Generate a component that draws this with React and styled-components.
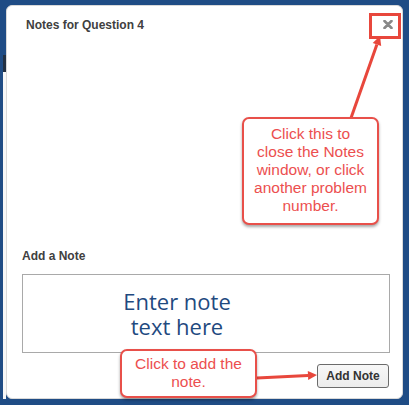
import React from 'react'
import styled, { createGlobalStyle } from 'styled-components'

const GlobalStyle = createGlobalStyle`
  html, body {
    margin: 0;
    padding: 0;
    height: 100%;
    overflow: hidden;
  }
  body {
    font-family: "Liberation Sans", Arial, sans-serif;
    background: #1f4c85;
  }
`

const Stage = styled.div`
  position: relative;
  width: 409px;
  height: 405px;
`

const Frame = styled.div`
  display: flex;
  height: 100%;
  box-sizing: border-box;
  padding: 5px 6px 6px 3px;
  background: #1f4c85;
`

// a sliver of the page behind the dialog
const PageEdge = styled.div`
  width: 3px;
  margin-top: 50px;
  background: linear-gradient(#223043 0 17px, #f7f7f7 17px);
`

const Modal = styled.div`
  flex: 1;
  display: flex;
  flex-direction: column;
  background: #fff;
  border: 1px solid #d9d9d9;
  border-radius: 6px;
  padding: 0 12px 10px 15px;
`

const Header = styled.div`
  display: flex;
  justify-content: space-between;
  align-items: flex-start;
  padding: 12px 0 0 4px;
`

const Title = styled.h4`
  margin: 0;
  font-size: 12px;
  line-height: 14px;
  font-weight: bold;
  color: #404040;
`

const CloseButton = styled.button`
  margin: 2px -3px 0 0;
  padding: 0;
  border: 0;
  background: none;
  width: 10px;
  height: 9px;
  display: flex;
  cursor: pointer;
`

const Spacer = styled.div`
  flex: 1;
`

const Label = styled.label`
  font-size: 12px;
  line-height: 14px;
  font-weight: bold;
  color: #404040;
  margin-bottom: 11px;
`

const NoteArea = styled.textarea`
  box-sizing: border-box;
  width: 100%;
  height: 79px;
  margin: 0;
  border: 1px solid #a9a9a9;
  padding: 14px 58px 0 0;
  resize: none;
  text-align: center;
  font-family: "Open Sans", sans-serif;
  font-size: 22px;
  line-height: 25px;
  color: #1f4a7f;
  outline: none;

  &::placeholder {
    color: #1f4a7f;
    opacity: 1;
  }
`

const ButtonRow = styled.div`
  display: flex;
  justify-content: flex-end;
  margin-top: 11px;
  padding-right: 1px;
`

const AddButton = styled.button`
  box-sizing: border-box;
  width: 72px;
  height: 24px;
  border: 1px solid #6b6b6b;
  border-radius: 3px;
  background: linear-gradient(#f7f7f7, #ececec);
  font-family: "Liberation Sans", Arial, sans-serif;
  font-size: 12px;
  font-weight: bold;
  color: #333;
  padding: 0;
`

const Overlay = styled.svg`
  position: absolute;
  inset: 0;
  pointer-events: none;
`

const Highlight = styled.div`
  position: absolute;
  left: 369px;
  top: 13px;
  width: 32px;
  height: 26px;
  box-sizing: border-box;
  border: 3px solid #e8473c;
`

const Callout = styled.div`
  position: absolute;
  left: ${p => p.$x}px;
  top: ${p => p.$y}px;
  width: ${p => p.$w}px;
  height: ${p => p.$h}px;
  box-sizing: border-box;
  padding-top: ${p => p.$pad}px;
  border: 2px solid #e8504a;
  border-radius: 7px;
  background: #fff;
  box-shadow: 0 2px 3px rgba(0, 0, 0, 0.35);
  text-align: center;
  font-size: 15.5px;
  line-height: 18px;
  color: #ec4f4f;
`

const RED = '#e8473c'

function App() {
  return (
    <Stage>
      <GlobalStyle />
      <Frame>
        <PageEdge />
        <Modal>
          <Header>
            <Title>Notes for Question 4</Title>
            <CloseButton aria-label="Close">
              <svg width="10" height="9" viewBox="0 0 10 9">
                <path d="M1.5 1 L8.5 8 M8.5 1 L1.5 8" stroke="#888" strokeWidth="2.6" strokeLinecap="round" />
              </svg>
            </CloseButton>
          </Header>
          <Spacer />
          <Label htmlFor="note">Add a Note</Label>
          <NoteArea id="note" placeholder={'Enter note\ntext here'} />
          <ButtonRow>
            <AddButton>Add Note</AddButton>
          </ButtonRow>
        </Modal>
      </Frame>

      <Highlight />
      <Overlay width="409" height="405" viewBox="0 0 409 405">
        <line x1="351" y1="118" x2="376.9" y2="44.5" stroke={RED} strokeWidth="3" />
        <polygon points="380,36 381.2,46 372.7,43" fill={RED} />
        <line x1="257" y1="378" x2="308" y2="375.5" stroke={RED} strokeWidth="3" />
        <polygon points="317,375 308.2,380 307.8,371" fill={RED} />
      </Overlay>
      <Callout $x={242} $y={117} $w={137} $h={108} $pad={6}>
        Click this to<br />close the Notes<br />window, or click<br />another problem<br />number.
      </Callout>
      <Callout $x={120} $y={349} $w={137} $h={49} $pad={4}>
        Click to add the<br />note.
      </Callout>
    </Stage>
  )
}

export default App
